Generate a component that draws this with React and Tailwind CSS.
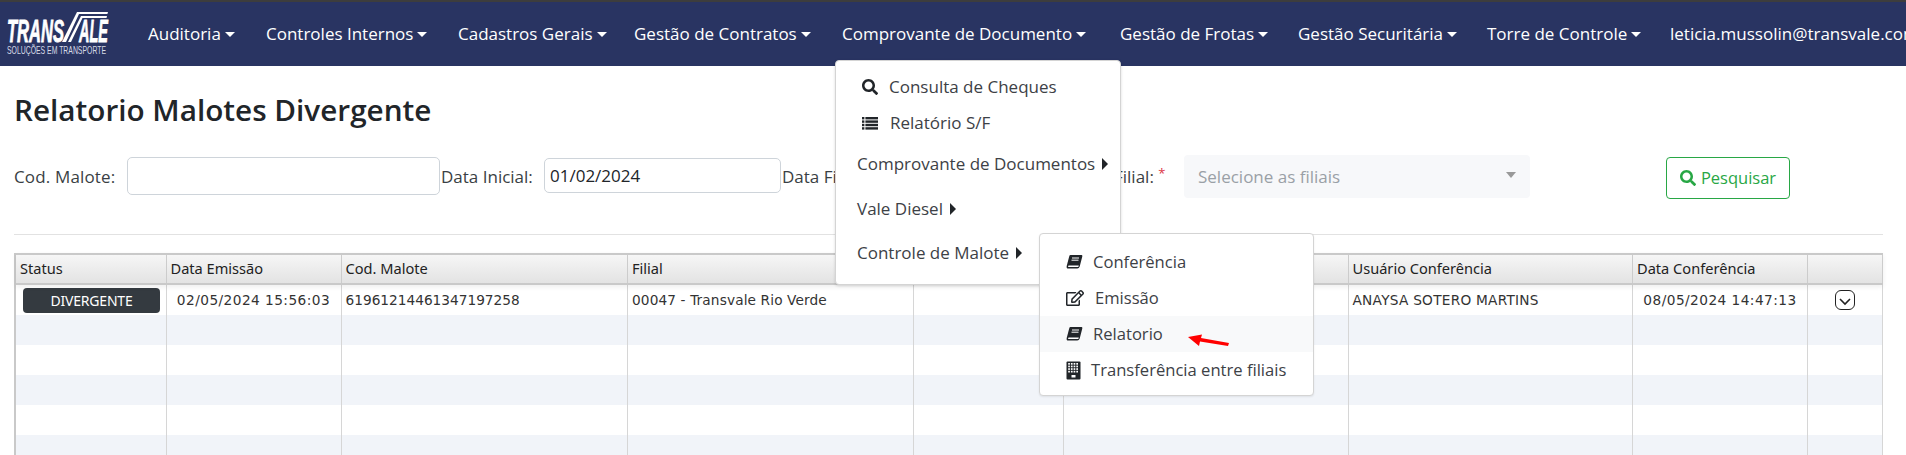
import React from 'react';
import { FaSearch, FaRegEdit } from 'react-icons/fa';

const navItems = [
  { label: 'Auditoria', width: 'w-[118px]' },
  { label: 'Controles Internos', width: 'w-[192px]' },
  { label: 'Cadastros Gerais', width: 'w-[176px]' },
  { label: 'Gestão de Contratos', width: 'w-[208px]' },
  { label: 'Comprovante de Documento', width: 'w-[278px]' },
  { label: 'Gestão de Frotas', width: 'w-[178px]' },
  { label: 'Gestão Securitária', width: 'w-[189px]' },
  { label: 'Torre de Controle', width: 'w-[183px]' },
];

const columns = [
  { label: 'Status', width: 'w-[150.5px]' },
  { label: 'Data Emissão', width: 'w-[175px]' },
  { label: 'Cod. Malote', width: 'w-[286.5px]' },
  { label: 'Filial', width: 'w-[285.5px]' },
  { label: '', width: 'w-[150px]' },
  { label: '', width: 'w-[285px]' },
  { label: 'Usuário Conferência', width: 'w-[284.5px]' },
  { label: 'Data Conferência', width: 'w-[175px]' },
  { label: '', width: 'w-[75px]' },
];

function Logo() {
  return (
    <div className="w-[101px] h-[42px] shrink-0 -mt-[2px]">
      <svg width="101" height="42" viewBox="0 0 101 42" className="overflow-visible">
        <path d="M55 30 L70 0 L101 0 L100.4 2 L72 2 L59 30 Z" fill="#ffffff" />
        <path d="M61 30 L74 4 L100 4 L99.5 6 L75.5 6 L64 30 Z" fill="#ffffff" />
        <text x="0" y="30" fill="#ffffff" stroke="#ffffff" strokeWidth="0.8" fontFamily="Liberation Sans" fontWeight="700" fontStyle="italic" fontSize="31" textLength="57" lengthAdjust="spacingAndGlyphs">TRANS</text>
        <text x="72" y="30" fill="#ffffff" stroke="#ffffff" strokeWidth="0.8" fontFamily="Liberation Sans" fontWeight="700" fontStyle="italic" fontSize="31" textLength="29" lengthAdjust="spacingAndGlyphs">ALE</text>
        <text x="0" y="42" fill="#d5d9e6" fontFamily="Liberation Sans" fontSize="11.5" textLength="99" lengthAdjust="spacingAndGlyphs">SOLUÇÕES EM TRANSPORTE</text>
      </svg>
    </div>
  );
}

function Caret() {
  return <span className="inline-block ml-[4px] align-[3px] border-t-[5px] border-x-[5px] border-x-transparent border-t-white"></span>;
}

function SideCaret() {
  return <span className="inline-block ml-[7px] border-l-[6px] border-y-[6px] border-y-transparent border-l-[#212529]"></span>;
}

function BookIcon() {
  return (
    <svg width="17" height="16" viewBox="0 0 17 16" className="shrink-0">
      <path d="M4.5 1 H15.5 Q16.6 1 16.3 2.4 L13.7 12.6 Q13.2 14.6 11.2 14.6 H2.2 Q0.2 14.6 0.7 12 L3.2 2.4 Q3.5 1 4.5 1 Z" fill="#212529" />
      <path d="M2.6 11.4 H12.8 L12.3 13 H2.2 Q1.8 12 2.6 11.4 Z" fill="#ffffff" />
      <path d="M6 4 H13 M5.5 6.2 H12.5" stroke="#ffffff" strokeWidth="1" />
    </svg>
  );
}

function ListIcon() {
  return (
    <svg width="16" height="13" viewBox="0 0 16 13" fill="#212529" className="shrink-0">
      {[0, 3.4, 6.8, 10.2].map((y) => (
        <g key={y}>
          <rect x="0" y={y} width="2.4" height="2.4" />
          <rect x="3.4" y={y} width="12.6" height="2.4" />
        </g>
      ))}
    </svg>
  );
}

function BuildingIcon() {
  const cols = [2.2, 4.9, 7.6, 10.3];
  const lines = [2, 4.6, 7.2, 9.8];
  return (
    <svg width="15" height="19" viewBox="0 0 15 19" className="shrink-0">
      <rect x="0.5" y="0.5" width="14" height="18" rx="1" fill="#212529" />
      {lines.map((y) => cols.map((x) => <rect key={`${x}-${y}`} x={x} y={y} width="1.7" height="1.7" fill="#ffffff" />))}
      <rect x="5.5" y="14" width="4" height="2.5" fill="#ffffff" />
    </svg>
  );
}

function Navbar() {
  return (
    <nav className="h-[66px] bg-[#293462] border-t-2 border-[#3d3d3d] flex items-center pl-[7px] whitespace-nowrap text-white text-[17px] overflow-hidden">
      <Logo />
      <ul className="flex ml-[40px]">
        {navItems.map((item) => (
          <li key={item.label} className={`${item.width} shrink-0`}>
            {item.label}
            <Caret />
          </li>
        ))}
        <li className="shrink-0">leticia.mussolin@transvale.com.br</li>
      </ul>
    </nav>
  );
}

function SearchForm() {
  return (
    <div className="h-[44px] mt-[27px] ml-[14px] flex items-start text-[17px] text-[#3a3f44] whitespace-nowrap">
      <label className="w-[113px] mt-[9px] shrink-0 tracking-[0.15px]">Cod. Malote:</label>
      <input className="w-[313px] h-[38px] mt-[2px] border border-[#ced4da] rounded-[5px] bg-white shrink-0" />
      <label className="w-[103px] mt-[9px] ml-[1px] shrink-0">Data Inicial:</label>
      <input defaultValue="01/02/2024" className="w-[237px] h-[35px] mt-[3px] px-[5px] border border-[#ced4da] rounded-[5px] bg-white text-[#212529] shrink-0" />
      <label className="w-[95px] mt-[9px] ml-[1px] shrink-0">Data Final:</label>
      <input className="w-[231px] h-[35px] mt-[3px] border border-[#ced4da] rounded-[5px] bg-white shrink-0" />
      <label className="w-[73px] mt-[9px] ml-[3px] shrink-0 pl-[3px]">
        Filial: <span className="text-[#dc3545] text-[13px] align-top">*</span>
      </label>
      <div className="w-[346px] h-[43px] bg-[#f7f8fa] rounded-[4px] flex items-center justify-between pl-[14px] pr-[14px] text-[#9aa0a6] shrink-0">
        <span>Selecione as filiais</span>
        <span className="border-t-[6px] border-x-[5px] border-x-transparent border-t-[#999999] -mt-[4px]"></span>
      </div>
      <button className="w-[124px] h-[42px] ml-[136px] mt-[2px] border border-[#28a745] rounded-[4px] text-[16.5px] text-[#28a745] flex items-center justify-center gap-[5px] shrink-0">
        <FaSearch className="w-[16px] h-[16px]" />
        Pesquisar
      </button>
    </div>
  );
}

function ReportTable() {
  const rows = [0, 1, 2, 3, 4, 5];
  return (
    <div className="ml-[14px] mt-[18px] w-[1869px] border-l-2 border-[#c9c9c9] font-['DejaVu_Sans',sans-serif] text-[13.7px] text-[#333333]">
      <div className="relative flex h-[32px] bg-gradient-to-b from-[#f6f6f6] to-[#e3e3e3] border-y-2 border-[#c9c9c9] shadow-[0_2px_5px_rgba(0,0,0,0.07)] font-['Noto_Sans',sans-serif] text-[14.6px] text-[#222222]">
        {columns.map((col, i) => (
          <div key={i} className={`${col.width} shrink-0 border-r border-[#cccccc] px-[4px] leading-[27px]`}>
            {col.label}
          </div>
        ))}
      </div>
      {rows.map((row) => (
        <div key={row} className={`flex h-[30px] ${row % 2 === 1 ? 'bg-[#f1f4f9]' : 'bg-white'}`}>
          {columns.map((col, i) => (
            <div key={i} className={`${col.width} shrink-0 border-r border-[#d6d6d6] flex items-center`}>
              {row === 0 && i === 0 && (
                <span className="ml-[7px] w-[137px] h-[25px] rounded-[4px] bg-[#343a40] text-white text-[14px] font-['Noto_Sans',sans-serif] tracking-[-0.2px] flex items-center justify-center">DIVERGENTE</span>
              )}
              {row === 0 && i === 1 && <span className="w-full text-center tracking-[0.45px]">02/05/2024 15:56:03</span>}
              {row === 0 && i === 2 && <span className="pl-[4px]">61961214461347197258</span>}
              {row === 0 && i === 3 && <span className="pl-[4px] tracking-[0.12px]">00047 - Transvale Rio Verde</span>}
              {row === 0 && i === 6 && <span className="pl-[4px] tracking-[0.25px]">ANAYSA SOTERO MARTINS</span>}
              {row === 0 && i === 7 && <span className="w-full text-center tracking-[0.45px]">08/05/2024 14:47:13</span>}
              {row === 0 && i === 8 && (
                <span className="mx-auto w-[20px] h-[20px] border border-[#222222] rounded-[6px] flex items-center justify-center">
                  <svg width="14" height="14" viewBox="0 0 14 14" fill="none" stroke="#222222" strokeWidth="1.6">
                    <path d="M2 6 L7 11 L12 6" />
                  </svg>
                </span>
              )}
            </div>
          ))}
        </div>
      ))}
    </div>
  );
}

function DropdownMenus() {
  return (
    <>
      <div className="absolute left-[835px] top-[60px] w-[286px] h-[225px] bg-white rounded-[4px] border border-[#d4d4d4] shadow-[0_1px_3px_rgba(0,0,0,0.15)] text-[17px] text-[#3d4146] whitespace-nowrap">
        <div className="absolute left-[26px] top-[15px] h-[22px] flex items-center">
          <FaSearch className="w-[16px] h-[16px] text-[#212529]" />
          <span className="ml-[11px]">Consulta de Cheques</span>
        </div>
        <div className="absolute left-[26px] top-[51px] h-[22px] flex items-center">
          <ListIcon />
          <span className="ml-[12px]">Relatório S/F</span>
        </div>
        <div className="absolute left-[21px] top-[92px] h-[22px] flex items-center">
          Comprovante de Documentos
          <SideCaret />
        </div>
        <div className="absolute left-[21px] top-[137px] h-[22px] flex items-center">
          Vale Diesel
          <SideCaret />
        </div>
        <div className="absolute left-[21px] top-[181px] h-[22px] flex items-center">
          Controle de Malote
          <SideCaret />
        </div>
      </div>
      <div className="absolute left-[1039px] top-[233px] w-[275px] h-[163px] bg-white rounded-[4px] border border-[#d4d4d4] shadow-[0_1px_2px_rgba(0,0,0,0.08)] text-[16.6px] text-[#3d4146] whitespace-nowrap flex flex-col pt-[10px]">
        <div className="h-[36px] pl-[26px] flex items-center">
          <BookIcon />
          <span className="ml-[10px]">Conferência</span>
        </div>
        <div className="h-[36px] pl-[26px] flex items-center">
          <FaRegEdit className="w-[18px] h-[16px] text-[#212529]" />
          <span className="ml-[11px]">Emissão</span>
        </div>
        <div className="h-[36px] pl-[26px] flex items-center bg-[#f8f9fa]">
          <BookIcon />
          <span className="ml-[10px]">Relatorio</span>
        </div>
        <div className="h-[36px] pl-[26px] flex items-center">
          <BuildingIcon />
          <span className="ml-[10px]">Transferência entre filiais</span>
        </div>
      </div>
      {/* seta vermelha */}
      <svg className="absolute left-[1185px] top-[333px]" width="48" height="16" viewBox="0 0 48 16">
        <path d="M3 4 L17 1.5 L16 5 L44 10 L43 13 L15 8.5 L14 13 Z" fill="#ff0000" />
      </svg>
    </>
  );
}

export default function App() {
  return (
    <div className="relative w-[1906px] h-[455px] overflow-hidden bg-white font-['Open_Sans',sans-serif]">
      <Navbar />
      <h1 className="mt-[26px] ml-[14px] text-[29.7px] leading-[36px] font-semibold text-[#212529]">Relatorio Malotes Divergente</h1>
      <SearchForm />
      <hr className="ml-[14px] mt-[35px] w-[1869px] border-[#e2e2e2]" />
      <ReportTable />
      <DropdownMenus />
    </div>
  );
}
